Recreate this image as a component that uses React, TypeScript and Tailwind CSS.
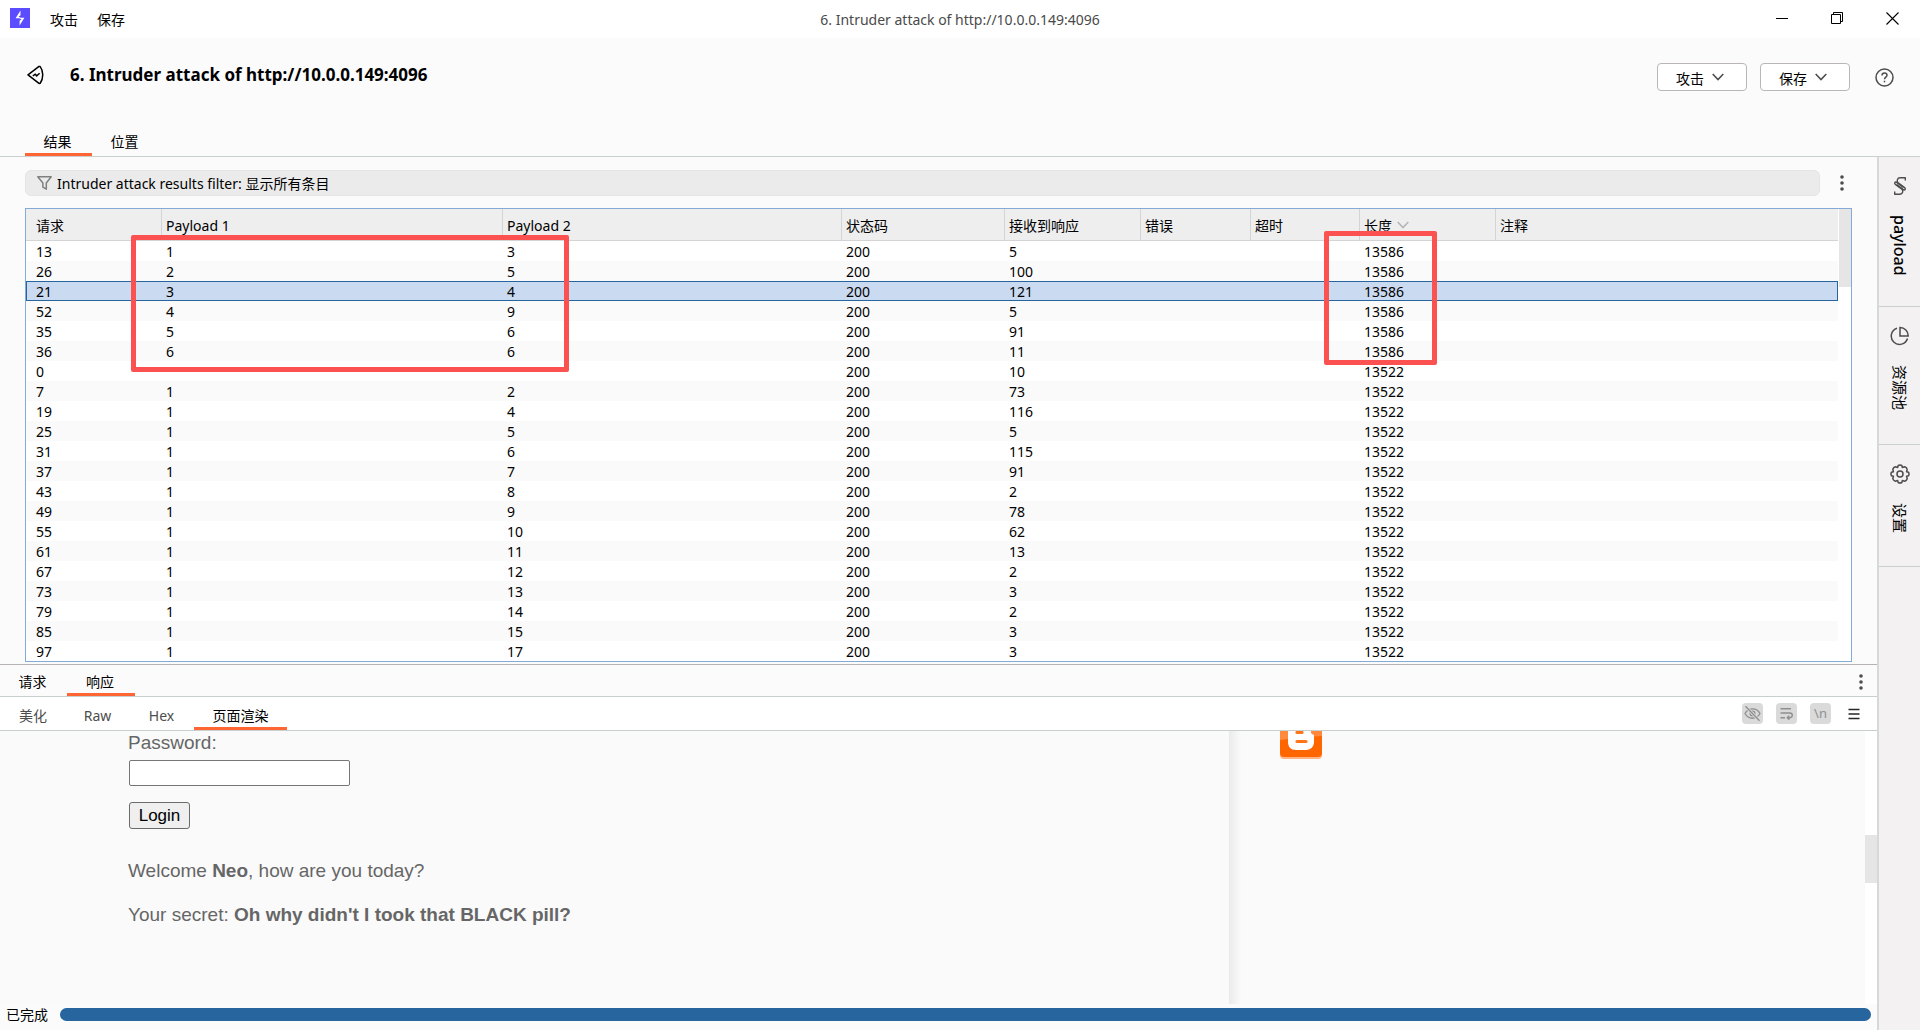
import type { ReactNode } from "react";
import clsx from "clsx";

type Row = [number, string, string, number, number, number];

const columns = [
  { label: "请求", width: "w-[136px]" },
  { label: "Payload 1", width: "w-[341px]" },
  { label: "Payload 2", width: "w-[339px]" },
  { label: "状态码", width: "w-[163px]" },
  { label: "接收到响应", width: "w-[136px]" },
  { label: "错误", width: "w-[110px]" },
  { label: "超时", width: "w-[109px]" },
  { label: "长度", width: "w-[136px]", sorted: true },
  { label: "注释", width: "" },
];

// request, payload 1, payload 2, status, response received, length
const rows: Row[] = [
  [13, "1", "3", 200, 5, 13586],
  [26, "2", "5", 200, 100, 13586],
  [21, "3", "4", 200, 121, 13586],
  [52, "4", "9", 200, 5, 13586],
  [35, "5", "6", 200, 91, 13586],
  [36, "6", "6", 200, 11, 13586],
  [0, "", "", 200, 10, 13522],
  [7, "1", "2", 200, 73, 13522],
  [19, "1", "4", 200, 116, 13522],
  [25, "1", "5", 200, 5, 13522],
  [31, "1", "6", 200, 115, 13522],
  [37, "1", "7", 200, 91, 13522],
  [43, "1", "8", 200, 2, 13522],
  [49, "1", "9", 200, 78, 13522],
  [55, "1", "10", 200, 62, 13522],
  [61, "1", "11", 200, 13, 13522],
  [67, "1", "12", 200, 2, 13522],
  [73, "1", "13", 200, 3, 13522],
  [79, "1", "14", 200, 2, 13522],
  [85, "1", "15", 200, 3, 13522],
  [97, "1", "17", 200, 3, 13522],
];

const SELECTED = 21;

function Chevron({ className }: { className?: string }) {
  return (
    <svg className={className} width="12" height="8" viewBox="0 0 12 8" fill="none" stroke="currentColor" aria-hidden>
      <path d="M0.7 1 6 6.5 11.3 1" strokeWidth="1.6" />
    </svg>
  );
}

function Kebab() {
  return (
    <svg width="4" height="16" viewBox="0 0 4 16" fill="#4d4d4d" aria-hidden>
      <circle cx="2" cy="2" r="1.8" />
      <circle cx="2" cy="8" r="1.8" />
      <circle cx="2" cy="14" r="1.8" />
    </svg>
  );
}

function TitleBar() {
  return (
    <header className="grid h-[38px] shrink-0 grid-cols-3 items-center bg-white">
      <div className="flex items-center pl-2.5">
        <svg width="20" height="20" viewBox="0 0 20 20" className="mb-0.5" aria-hidden>
          <rect width="20" height="20" fill="#5b4dff" />
          <path d="M10.5 2.6V7.2L8.6 8.4 11 10.2H5.6Z" fill="#fff" />
          <path d="M9.6 17.6V12.8L11.4 11.5 9 9.8H14.4Z" fill="#fff" />
        </svg>
        <nav className="ml-5 flex gap-[19px] pt-0.5">
          <button type="button">攻击</button>
          <button type="button">保存</button>
        </nav>
      </div>
      <p className="pt-0.5 text-center text-[#4a4a4a]">6. Intruder attack of http://10.0.0.149:4096</p>
      <div className="flex items-center justify-end gap-[42px] pb-0.5 pr-[21px]">
        <button type="button" aria-label="最小化">
          <svg width="13" height="13" viewBox="0 0 13 13" stroke="#000" fill="none">
            <path d="M0 6.5h12" />
          </svg>
        </button>
        <button type="button" aria-label="还原">
          <svg width="13" height="13" viewBox="0 0 13 13" stroke="#000" fill="none">
            <path d="M0.5 2.5h9v9h-9zM2.5 2.5v-2h9v9h-2" />
          </svg>
        </button>
        <button type="button" aria-label="关闭">
          <svg width="13" height="13" viewBox="0 0 13 13" stroke="#000" fill="none" strokeWidth="1.1">
            <path d="M0.5 0.5l12 12M12.5 0.5l-12 12" />
          </svg>
        </button>
      </div>
    </header>
  );
}

function MenuButton({ children }: { children: ReactNode }) {
  return (
    <button
      type="button"
      className="flex h-7 w-[90px] items-center justify-center gap-2 rounded-[4px] border border-[#bab6b6] bg-white pr-1"
    >
      <span className="pt-1">{children}</span>
      <Chevron className="text-[#4d4d4d]" />
    </button>
  );
}

function PageHeader() {
  return (
    <div className="flex h-[119px] shrink-0 flex-col justify-between border-b border-[#c9cfce]">
      <div className="flex items-center pl-[27px] pr-[26px] pt-[25px]">
        <svg
          className="mb-1"
          width="17"
          height="20"
          viewBox="0 0 17 20"
          fill="none"
          stroke="#000"
          strokeWidth="1.5"
          strokeLinejoin="round"
          aria-hidden
        >
          <path d="M1 9.8 12 1.4 13.2 1.6C16.6 6 16.6 13.5 13.2 18.2L12 18.4Z" />
          <path d="M5.8 10.8 8.4 9.2 9.6 11 12.6 8.2" strokeWidth="1.5" />
        </svg>
        <h1 className="ml-[26px] pb-1 text-[17px] font-bold leading-6">6. Intruder attack of http://10.0.0.149:4096</h1>
        <div className="ml-auto flex items-center gap-[13px]">
          <MenuButton>攻击</MenuButton>
          <MenuButton>保存</MenuButton>
          <button type="button" aria-label="帮助" className="ml-3">
            <svg width="19" height="19" viewBox="0 0 19 19" fill="none" stroke="#4d4d4d" strokeWidth="1.5">
              <circle cx="9.5" cy="9.5" r="8.5" />
              <path d="M7 7.4C7 4.3 12 4.4 12 7.3 12 9.2 9.5 9 9.5 11.3" />
              <path d="M9.5 12.7v1.6" />
            </svg>
          </button>
        </div>
      </div>
      <div role="tablist" className="flex pl-[25px]">
        <button type="button" role="tab" aria-selected className="h-[30px] w-[67px] border-b-3 border-[#ff6633] pr-0.5 pt-1">
          结果
        </button>
        <button
          type="button"
          role="tab"
          aria-selected={false}
          className="h-[30px] w-[67px] border-b-3 border-transparent pr-0.5 pt-1"
        >
          位置
        </button>
      </div>
    </div>
  );
}

function FilterBar() {
  return (
    <div className="flex items-center">
      <button
        type="button"
        className="flex h-[26px] flex-1 items-center gap-[5px] rounded-md border border-[#e4e4e4] bg-[#ebebeb] pl-[11px] text-left"
      >
        <svg width="15" height="14" viewBox="0 0 15 14" fill="none" stroke="#808080" strokeWidth="1.5" strokeLinejoin="round" aria-hidden>
          <path d="M0.8 0.8h13.4L9.3 7v6.2l-3.4-2V7Z" />
        </svg>
        <span className="pt-0.5">Intruder attack results filter: 显示所有条目</span>
      </button>
      <button type="button" aria-label="更多" className="ml-5 mr-2">
        <Kebab />
      </button>
    </div>
  );
}

function ResultsTable() {
  return (
    <div className="relative mt-3 flex border border-[#84abd8] bg-white">
      <table className="w-full flex-1 table-fixed border-separate border-spacing-0">
        <thead>
          <tr className="h-8 bg-[#eeeeee]">
            {columns.map((col, i) => (
              <th
                key={col.label}
                scope="col"
                className={clsx(
                  "border-b border-b-[#d4d4d4] pt-0.5 text-left font-normal",
                  col.width,
                  i === 0 ? "pl-2.5" : "pl-1",
                  i < columns.length - 1 && "border-r border-r-[#d4d4d4]",
                )}
              >
                {col.label}
                {col.sorted && <Chevron className="mb-1 ml-[5px] inline text-[#b5b5b5]" />}
              </th>
            ))}
          </tr>
        </thead>
        <tbody>
          {rows.map(([id, p1, p2, status, received, length]) => (
            <tr
              key={id}
              aria-selected={id === SELECTED}
              className={clsx(
                "h-5 leading-[18px]",
                id === SELECTED
                  ? "bg-[#cadaf0] outline-1 -outline-offset-1 outline-[#26659d]"
                  : "even:bg-[#fafafa]",
              )}
            >
              <td className="pl-2.5 pt-0.5">{id}</td>
              <td className="pl-1 pt-0.5">{p1}</td>
              <td className="pl-1 pt-0.5">{p2}</td>
              <td className="pl-1 pt-0.5">{status}</td>
              <td className="pl-1 pt-0.5">{received}</td>
              <td />
              <td />
              <td className="pl-1 pt-0.5">{length}</td>
              <td />
            </tr>
          ))}
        </tbody>
      </table>
      {/* scrollbar */}
      <div className="w-[13px] shrink-0 bg-white pl-px">
        <div className="h-[78px] bg-[#e5e5e5]" />
      </div>
      {/* highlight boxes */}
      <div className="pointer-events-none absolute left-[105px] top-[26px] h-[137px] w-[438px] rounded-xs border-5 border-[#fc5151]" />
      <div className="pointer-events-none absolute left-[1298px] top-[22px] h-[134px] w-[113px] rounded-xs border-5 border-[#fc5151]" />
    </div>
  );
}

function MessageTabs() {
  return (
    <div className="flex h-[33px] items-end border-t border-b border-t-[#b7b3b3] border-b-[#c9cfce] bg-[#fbfbfb]">
      <div role="tablist" className="flex">
        <button
          type="button"
          role="tab"
          aria-selected={false}
          className="h-[31px] w-[67px] border-b-3 border-transparent pr-0.5 pt-1.5"
        >
          请求
        </button>
        <button type="button" role="tab" aria-selected className="h-[31px] w-[68px] border-b-3 border-[#ff6633] pr-0.5 pt-1.5">
          响应
        </button>
      </div>
      <button type="button" aria-label="更多" className="mb-1.5 ml-auto mr-[14px]">
        <Kebab />
      </button>
    </div>
  );
}

function ToolButton({ label, children }: { label: string; children: ReactNode }) {
  return (
    <button
      type="button"
      aria-label={label}
      className="flex size-[21px] items-center justify-center rounded-[4px] bg-[#dadada] text-[#8f8f8f]"
    >
      {children}
    </button>
  );
}

const viewTabs = [
  { label: "美化", className: "w-[66px] border-transparent" },
  { label: "Raw", className: "w-[63px] border-transparent" },
  { label: "Hex", className: "w-[65px] border-transparent" },
  { label: "页面渲染", className: "w-[93px] border-[#ff6633] text-black", active: true },
];

function ViewTabs() {
  return (
    <div className="flex h-[34px] items-center border-b border-[#c9cfce] bg-white">
      <div role="tablist" className="flex text-[#4d4d4d]">
        {viewTabs.map((tab) => (
          <button
            key={tab.label}
            type="button"
            role="tab"
            aria-selected={!!tab.active}
            className={clsx("h-[33px] border-b-3 pt-2", tab.className)}
          >
            {tab.label}
          </button>
        ))}
      </div>
      <div className="ml-auto mr-[17px] flex items-center gap-[13px]">
        <ToolButton label="隐藏">
          <svg width="17" height="17" viewBox="0 0 17 17" fill="none" stroke="currentColor" strokeWidth="1.3">
            <path d="M1 8.5C4.5 2.2 12.5 2.2 16 8.5 12.5 14.8 4.5 14.8 1 8.5Z" />
            <circle cx="8.5" cy="8.5" r="2.4" />
            <path d="M1.5 1.2 15.5 15.8" stroke="#dadada" strokeWidth="3" />
            <path d="M1.5 1.2 15.5 15.8" />
          </svg>
        </ToolButton>
        <ToolButton label="换行">
          <svg width="13" height="13" viewBox="0 0 13 13" fill="none" stroke="currentColor" strokeWidth="1.4">
            <path d="M0.5 1.7h10.5M0.5 6h9.5c3 0 3 4.7 0 4.7H8M0.5 10.7h4.5M9.3 8.7 7.3 10.7l2 2" />
          </svg>
        </ToolButton>
        <ToolButton label="换行符">
          <span className="text-[13px] leading-none">\n</span>
        </ToolButton>
        <button type="button" aria-label="菜单" className="ml-1">
          <svg width="12" height="12" viewBox="0 0 12 12" stroke="#262626" strokeWidth="1.6">
            <path d="M0.5 1.5h11M0.5 6h11M0.5 10.5h11" />
          </svg>
        </button>
      </div>
    </div>
  );
}

function RenderedPage() {
  return (
    <div className="flex min-h-60 flex-1 overflow-hidden bg-[#fafafa] font-['Liberation_Sans',sans-serif] text-[19px] leading-6 text-[#666]">
      <form className="flex w-[1229px] flex-col items-start pl-32" onSubmit={(e) => e.preventDefault()}>
        <label htmlFor="password">Password:</label>
        <input
          id="password"
          type="password"
          className="ml-px mt-[5px] h-[26px] w-[221px] rounded-xs border border-[#767676] bg-white"
        />
        <button
          type="submit"
          className="ml-px mt-4 h-[27px] w-[61px] rounded-[3px] border border-[#6b6b6b] bg-[#efefef] text-[17px] leading-none text-black"
        >
          Login
        </button>
        <p className="mt-[30px]">
          Welcome <b>Neo</b>, how are you today?
        </p>
        <p className="mt-5">
          Your secret: <b>Oh why didn't I took that BLACK pill?</b>
        </p>
      </form>
      <div className="w-3 bg-linear-to-r from-[#eaeaea] to-[#fafafa]" />
      <svg className="ml-[39px]" width="42" height="28" viewBox="0 14 42 28" role="img" aria-label="Blogger">
        <rect y="1" width="42" height="41" rx="4" fill="#ffb385" />
        <rect width="42" height="40" rx="4" fill="#ff6600" />
        <path d="M0 0h42v19Q20 20 0 23Z" fill="#ff8a3d" />
        <path d="M8 8h16c5 0 7 2 7 6 0 2 0 3 3 4v7c0 5-4 8-8 8H16c-5 0-8-3-8-8Z" fill="#fff" />
        <path d="M17 15.5h5M17 24.5h9" stroke="#ff7519" strokeWidth="3.2" strokeLinecap="round" />
      </svg>
      <div className="ml-auto w-3 bg-white pt-[104px]">
        <div className="h-12 bg-[#e5e5e5]" />
      </div>
    </div>
  );
}

const panels = [
  {
    label: "payload",
    className: "h-[150px] text-[16px] font-medium",
    icon: (
      <svg width="14" height="20" viewBox="0 0 14 20" fill="none" stroke="#4d4d4d" strokeWidth="1.4" strokeLinejoin="round">
        <path d="M12.3 4.6V1.8H7C4.400 1.800 3.200 5.200 5.200 6.800L11.600 11.600C13.200 13 11.800 14.600 10.400 13.600L3.600 8.600" />
        <path d="M1.7 15.400V18.2H7C9.600 18.200 10.800 14.800 8.800 13.200L2.400 8.400C0.800 7 2.200 5.400 3.600 6.400L10.400 11.400" />
      </svg>
    ),
  },
  {
    label: "资源池",
    className: "h-[138px] text-[15px]",
    icon: (
      <svg width="19" height="20" viewBox="0 0 19 20" fill="none" stroke="#4d4d4d" strokeWidth="1.5">
        <path d="M7 2.2A8.3 8.3 0 1 0 17.5 12.5" />
        <path d="M10 1.5v8.5h8.2A8.3 8.3 0 0 0 10 1.5Z" />
      </svg>
    ),
  },
  {
    label: "设置",
    className: "h-[122px] text-[15px]",
    icon: (
      <svg width="20" height="20" viewBox="0 0 20 20" fill="none" stroke="#4d4d4d" strokeWidth="1.5" strokeLinejoin="round">
        <circle cx="10" cy="10" r="3" />
        <path d="M8.2 1.5Q10 0.5 11.8 1.5L12.3 3.4 14.7 2.8Q16.8 3.5 17.2 5.3L16.6 7.7 18.5 8.2Q19.5 10 18.5 11.8L16.6 12.3 17.2 14.7Q16.5 16.8 14.7 17.2L12.3 16.6 11.8 18.5Q10 19.5 8.2 18.5L7.7 16.6 5.3 17.2Q3.2 16.5 2.8 14.7L3.4 12.3 1.5 11.8Q0.5 10 1.5 8.2L3.4 7.7 2.8 5.3Q3.5 3.2 5.3 2.8L7.7 3.4Z" />
      </svg>
    ),
  },
];

function SideBar() {
  return (
    <aside className="w-[43px] shrink-0 border-l-2 border-[#d5d9d9] bg-[#f3f1f2]">
      {panels.map((panel) => (
        <button
          key={panel.label}
          type="button"
          className={clsx(
            "flex w-full flex-col items-center gap-[19px] border-b border-[#c9cfce] pt-[19px]",
            panel.className,
          )}
        >
          {panel.icon}
          <span className="leading-5 [text-orientation:sideways] [writing-mode:vertical-rl]">{panel.label}</span>
        </button>
      ))}
    </aside>
  );
}

export default function App() {
  return (
    <div className="flex min-h-screen flex-col bg-[#fbfbfb] font-['Noto_Sans','Noto_Sans_CJK_SC',sans-serif] text-[14px] leading-5 text-black">
      <TitleBar />
      <PageHeader />
      <div className="flex flex-1">
        <main className="flex min-w-0 flex-1 flex-col">
          <section className="px-[25px] pb-0.5 pt-[13px]">
            <FilterBar />
            <ResultsTable />
          </section>
          <MessageTabs />
          <ViewTabs />
          <RenderedPage />
          <footer className="flex h-[26px] items-center gap-3 px-1.5 pb-1">
            <span>已完成</span>
            <div
              role="progressbar"
              aria-valuenow={100}
              aria-label="已完成"
              className="mb-0.5 h-[13px] flex-1 rounded-full bg-[#26659d]"
            />
          </footer>
        </main>
        <SideBar />
      </div>
    </div>
  );
}
